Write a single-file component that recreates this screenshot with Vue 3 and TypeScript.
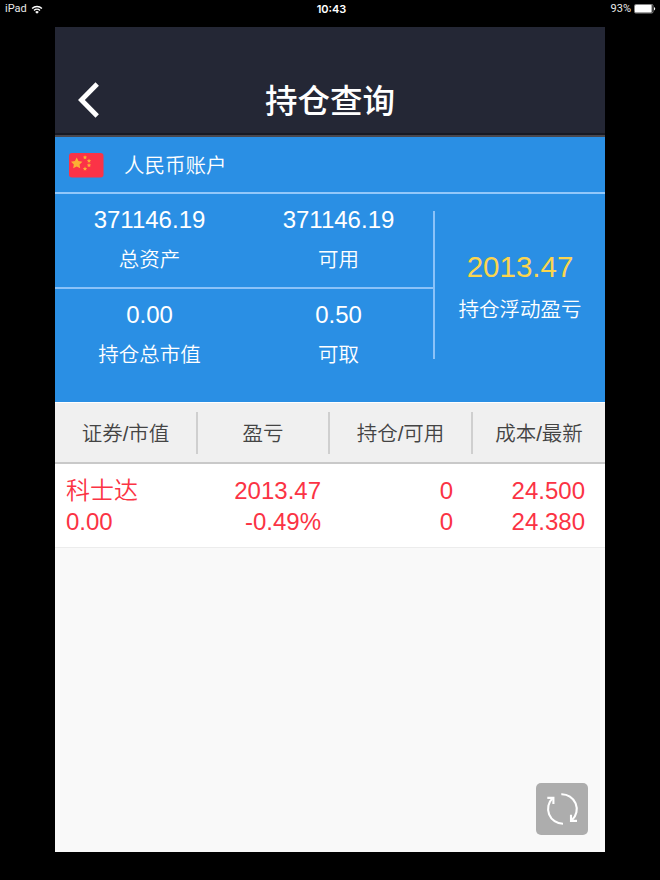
<template>
    <div class="screen">
        <!-- status bar -->
        <div class="status-bar">
            <div class="status-left">
                <span>iPad</span>
                <svg class="wifi" viewBox="0 0 12 9" width="12" height="9">
                    <path d="M1.1 3.5a6.9 6.9 0 0 1 9.8 0M3 5.4a4.3 4.3 0 0 1 6 0" fill="none" stroke="#fff" stroke-width="1.4" />
                    <path d="M6 8.7L4.2 6.9a2.6 2.6 0 0 1 3.6 0z" fill="#fff" />
                </svg>
            </div>
            <span class="status-time">10:43</span>
            <div class="status-right">
                <span>93%</span>
                <svg class="battery" viewBox="0 0 22 10" width="22" height="10">
                    <rect x="0.5" y="0.5" width="18.5" height="8.5" rx="1.2" fill="none" stroke="#aaa" stroke-width="0.8" />
                    <rect x="1" y="1" width="16.7" height="7.5" rx="0.4" fill="#fff" />
                    <path d="M20 3.1a1.8 1.8 0 0 1 0 3.4z" fill="#fff" />
                </svg>
            </div>
        </div>

        <div class="app">
            <header class="nav">
                <svg class="back" viewBox="0 0 22 36" width="22" height="36">
                    <path d="M19.2 2L3.4 18L19.2 34" fill="none" stroke="#fff" stroke-width="4.8" />
                </svg>
                <h1 class="title">持仓查询</h1>
            </header>

            <section class="account">
                <div class="account-head">
                    <svg class="flag" viewBox="0 0 35 25" width="35" height="25">
                        <rect width="34.5" height="24.5" rx="3" fill="#fb3347" />
                        <polygon v-for="(star, i) in stars" :key="i" :points="starPoints(star)" fill="#fbb034" />
                    </svg>
                    <span class="account-name">人民币账户</span>
                </div>

                <div class="summary">
                    <div class="summary-grid">
                        <div v-for="item in summary" :key="item.label" class="summary-cell">
                            <div class="summary-value">{{ item.value }}</div>
                            <div class="summary-label">{{ item.label }}</div>
                        </div>
                    </div>
                    <div class="profit">
                        <div class="profit-value">2013.47</div>
                        <div class="summary-label">持仓浮动盈亏</div>
                    </div>
                </div>
            </section>

            <div class="table-head">
                <div v-for="col in columns" :key="col" class="head-cell">{{ col }}</div>
            </div>

            <div v-for="row in positions" :key="row.name" class="table-row">
                <div class="cell">
                    <div>{{ row.name }}</div>
                    <div>{{ row.marketValue }}</div>
                </div>
                <div class="cell">
                    <div>{{ row.profit }}</div>
                    <div>{{ row.profitRate }}</div>
                </div>
                <div class="cell">
                    <div>{{ row.amount }}</div>
                    <div>{{ row.available }}</div>
                </div>
                <div class="cell">
                    <div>{{ row.cost }}</div>
                    <div>{{ row.latest }}</div>
                </div>
            </div>

            <button class="refresh" type="button" aria-label="刷新">
                <svg viewBox="0 0 52 52" width="52" height="52" fill="none" stroke="#fff" stroke-width="2.1">
                    <path d="M25.3 11.2A14.9 14.9 0 0 1 36 37M27 40.8A14.9 14.9 0 0 1 16.8 15" />
                    <path d="M11.3 14.9H17.4V21M41 37.9H35V31.8" />
                </svg>
            </button>
        </div>
    </div>
</template>

<script setup lang="ts">
import { ref } from 'vue'

interface Star {
    x: number
    y: number
    r: number
}

interface SummaryItem {
    label: string
    value: string
}

interface Position {
    name: string
    marketValue: string
    profit: string
    profitRate: string
    amount: number
    available: number
    cost: string
    latest: string
}

const stars: Star[] = [
    { x: 7.7, y: 10.5, r: 6 },
    { x: 16, y: 4.5, r: 2.2 },
    { x: 20, y: 8, r: 2.2 },
    { x: 20, y: 12.3, r: 2.2 },
    { x: 16, y: 15.8, r: 2.2 },
]

const summary = ref<SummaryItem[]>([
    { label: '总资产', value: '371146.19' },
    { label: '可用', value: '371146.19' },
    { label: '持仓总市值', value: '0.00' },
    { label: '可取', value: '0.50' },
])

const columns = ['证券/市值', '盈亏', '持仓/可用', '成本/最新']

const positions = ref<Position[]>([
    {
        name: '科士达',
        marketValue: '0.00',
        profit: '2013.47',
        profitRate: '-0.49%',
        amount: 0,
        available: 0,
        cost: '24.500',
        latest: '24.380',
    },
])

function starPoints({ x, y, r }: Star) {
    return Array.from({ length: 10 }, (_, i) => {
        const radius = i % 2 ? r * 0.5 : r
        const angle = (Math.PI / 5) * i - Math.PI / 2
        return `${(x + radius * Math.cos(angle)).toFixed(2)},${(y + radius * Math.sin(angle)).toFixed(2)}`
    }).join(' ')
}
</script>

<style>
body {
    background: #000;
}
</style>

<style scoped>
.screen {
    width: 660px;
    height: 880px;
    background: #000;
    font-family: 'Liberation Sans', 'Noto Sans CJK SC', sans-serif;
    font-weight: 350;
    overflow: hidden;
}

.status-bar {
    display: grid;
    grid-template-columns: 1fr auto 1fr;
    align-items: center;
    box-sizing: border-box;
    height: 27px;
    padding: 0 4px 9px 5px;
    color: #e8e8e8;
    font-family: Roboto, sans-serif;
    font-size: 11px;
    font-weight: 400;
    line-height: 18px;
}

.status-left,
.status-right {
    display: flex;
    align-items: center;
}

.status-left {
    gap: 4px;
}

.status-right {
    justify-content: flex-end;
    gap: 3px;
}

.status-time {
    padding-left: 2px;
    font-family: Inter, sans-serif;
    font-weight: 600;
    color: #fff;
}

.app {
    position: relative;
    width: 550px;
    height: 825px;
    margin: 0 auto;
    background: #f9f9f9;
}

.nav {
    display: grid;
    grid-template-columns: 60px 1fr 60px;
    align-items: center;
    box-sizing: border-box;
    height: 110px;
    padding-top: 38px;
    background: #242735;
    border-bottom: 2px solid #49474d;
    box-shadow: inset 0 -2px #171923;
}

.back {
    margin-left: 23px;
}

.title {
    margin: 0;
    padding-top: 4px;
    color: #fff;
    font-size: 32.5px;
    font-weight: 500;
    line-height: 48px;
    text-align: center;
}

.account {
    box-sizing: border-box;
    height: 265px;
    background: #2a8fe4;
    color: #fff;
}

.account-head {
    display: flex;
    align-items: center;
    gap: 20px;
    box-sizing: border-box;
    height: 57px;
    padding: 2px 0 0 14px;
    border-bottom: 2px solid #93c8fa;
}

.account-name {
    font-size: 20.5px;
    line-height: 30px;
}

.summary {
    display: flex;
}

.summary-grid {
    display: grid;
    grid-template-columns: 189px 189px;
    grid-template-rows: 95px 93px;
}

.summary-cell {
    padding-top: 9px;
    text-align: center;
}

.summary-cell:nth-child(-n + 2) {
    border-bottom: 2px solid #8bc2f8;
}

.summary-value {
    font-size: 24px;
    line-height: 34px;
}

.summary-label {
    font-size: 20.5px;
    line-height: 30px;
    margin-top: 8px;
}

.profit {
    box-sizing: border-box;
    width: 172px;
    height: 148px;
    margin-top: 17px;
    padding-top: 36px;
    border-left: 2px solid #8bc2f8;
    text-align: center;
}

.profit-value {
    color: #fbd54e;
    font-size: 29.5px;
    line-height: 40px;
}

.table-head {
    display: grid;
    grid-template-columns: 141px 132px 143px 134px;
    align-items: center;
    box-sizing: border-box;
    height: 62px;
    background: #f0f0f0;
    border-top: 1px solid #fff;
    border-bottom: 2px solid #c9c9c9;
}

.head-cell {
    box-sizing: border-box;
    height: 42px;
    padding-top: 1px;
    color: #444;
    font-size: 20.5px;
    line-height: 42px;
    text-align: center;
}

.head-cell + .head-cell {
    border-left: 2px solid #cfcfcf;
}

.table-row {
    display: grid;
    grid-template-columns: 130px 125px 132px 132px;
    box-sizing: border-box;
    height: 84px;
    padding: 11px 20px 0 11px;
    background: #fff;
    border-bottom: 1px solid #ececec;
    color: #fb3344;
    font-size: 24px;
    line-height: 31px;
}

.cell + .cell {
    text-align: right;
}

.refresh {
    position: absolute;
    right: 17px;
    bottom: 17px;
    width: 52px;
    height: 52px;
    padding: 0;
    border: 0;
    border-radius: 5px;
    background: #adadad;
}

.refresh svg {
    display: block;
}
</style>
